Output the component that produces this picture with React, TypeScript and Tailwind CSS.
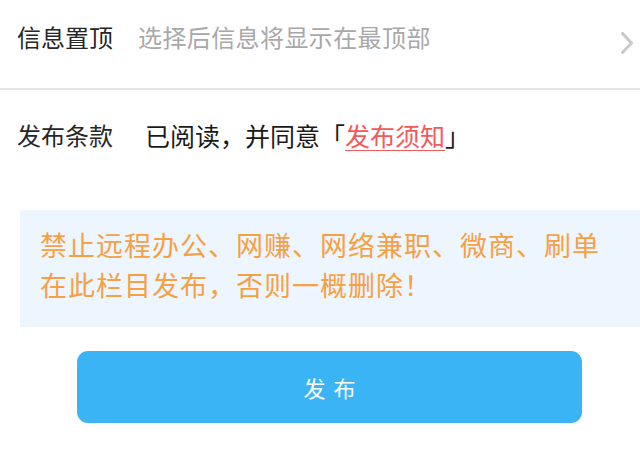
import React from "react";

export default function App() {
  const font = { fontFamily: '"Noto Sans CJK SC", "Noto Sans", sans-serif' };
  return (
    <div className="w-[640px] h-[468px] bg-white overflow-hidden" style={font}>
      {/* Row 1 */}
      <div className="flex items-start h-[88px] pl-[17px] pr-[6px] pt-[23px]">
        <span className="text-[24px] leading-[28px] text-[#262626] w-[121px] shrink-0">信息置顶</span>
        <span className="text-[24px] leading-[28px] tracking-[0.4px] text-[#a8a8a8] flex-1">选择后信息将显示在最顶部</span>
        <svg className="mt-[9px]" width="14" height="22" viewBox="0 0 14 22" fill="none">
          <path d="M2.5 1.5 L11.5 11 L2.5 20.5" stroke="#c9c9c9" strokeWidth="3" strokeLinecap="round" strokeLinejoin="round" />
        </svg>
      </div>
      <div className="h-[2px] bg-[#e1e5e9]" />
      {/* Row 2 */}
      <div className="flex items-start h-[120px] pl-[17px] pt-[31px]">
        <span className="text-[24px] leading-[28px] text-[#262626] w-[128px] shrink-0">发布条款</span>
        <span className="text-[25px] leading-[28px] text-[#1a1a1a]">
          已阅读，并同意「<span className="text-[#f25a5a] underline underline-offset-[4px] decoration-[1px]">发布须知</span>」
        </span>
      </div>
      {/* Notice */}
      <div className="ml-[20px] h-[117px] bg-[#edf6fe] pl-[20px] pt-[15px]">
        <p className="text-[27px] leading-[40px] tracking-[1px] text-[#f6a043]">
          禁止远程办公、网赚、网络兼职、微商、刷单
          <br />
          在此栏目发布，否则一概删除！
        </p>
      </div>
      {/* Button */}
      <div className="pt-[24px] pl-[77px]">
        <button className="w-[505px] h-[72px] rounded-[11px] bg-[#3bb4f6] text-white text-[22px] tracking-[8px] pl-[8px] flex items-center justify-center">
          发布
        </button>
      </div>
    </div>
  );
}
